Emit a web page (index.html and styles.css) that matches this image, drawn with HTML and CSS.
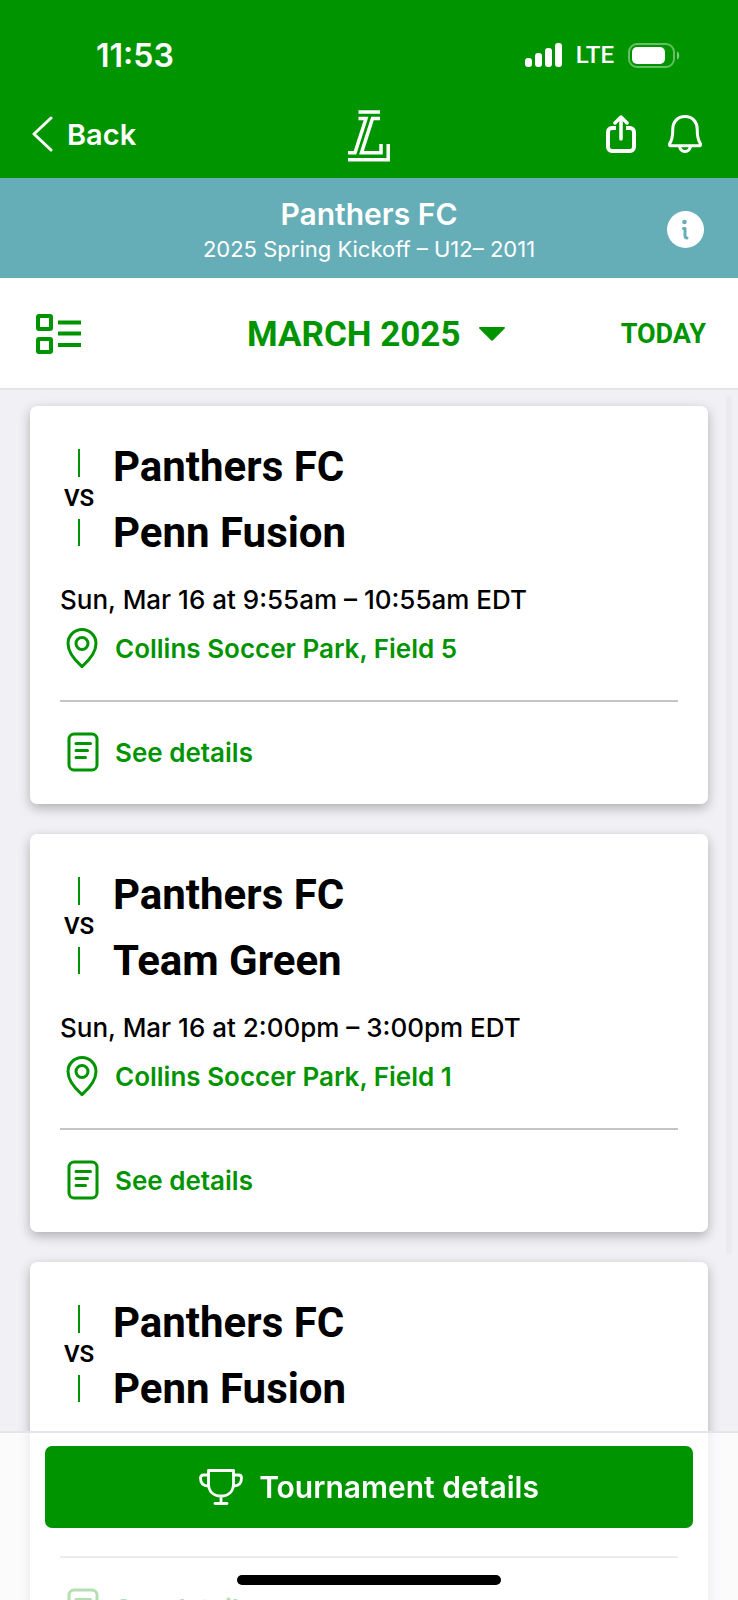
FILE: index.html
```html
<!DOCTYPE html>
<html lang="en">

<head>
    <meta charset="UTF-8">
    <meta name="viewport" content="width=device-width, initial-scale=1.0">
    <title>Panthers FC</title>
    <link rel="stylesheet" href="styles.css">
</head>

<body>
    <!-- shared card icons -->
    <svg class="sprite" aria-hidden="true">
        <symbol id="icon-pin" viewBox="0 0 44 44">
            <path d="M22 40.5C18 37 8 28.500 8 17.500a14 14 0 0 1 28 0C36 28.500 26 37 22 40.500Z" />
            <circle cx="22" cy="17.500" r="6" />
        </symbol>
        <symbol id="icon-details" viewBox="0 0 44 44">
            <rect x="9" y="4" width="28" height="36" rx="5" />
            <path d="M16 13.500h14.500M16 20.500h11.500M16 27.500h9.500" />
        </symbol>
    </svg>

    <header class="header">
        <div class="status-bar">
            <span class="time">11:53</span>
            <div class="status-icons">
                <svg width="37" height="24" viewBox="0 0 37 24" fill="#fff" aria-hidden="true">
                    <rect x="0" y="15" width="7" height="9" rx="3" />
                    <rect x="10" y="10" width="7" height="14" rx="3" />
                    <rect x="20" y="5" width="7" height="19" rx="3" />
                    <rect x="30" y="0" width="7" height="24" rx="3" />
                </svg>
                <span class="network">LTE</span>
                <svg width="52" height="25" viewBox="0 0 52 25" aria-hidden="true">
                    <rect x="1" y="1" width="45" height="23" rx="8" fill="none" stroke="#fff" stroke-opacity=".4" stroke-width="2" />
                    <rect x="4" y="4" width="33" height="17" rx="5" fill="#fff" />
                    <path d="M49 8.500c3 1 3 7 0 8Z" fill="#fff" fill-opacity=".5" />
                </svg>
            </div>
        </div>

        <nav class="nav">
            <a class="back" href="#">
                <svg width="21" height="36" viewBox="0 0 21 36" aria-hidden="true">
                    <path d="M19 2 2 18l17 16" fill="none" stroke="#fff" stroke-width="3" stroke-linecap="round" stroke-linejoin="round" />
                </svg>
                Back
            </a>
            <svg class="logo" width="42" height="52" viewBox="0 0 42 52" role="img" aria-label="Home">
                <path d="M10.500 2H32M10.500 8.500H18L7 42.800H0M32 8.500h-7.500L13.500 42.800H33V34M0 49.700h40.200V34" fill="none" stroke="#fff" stroke-width="3.500" />
            </svg>
            <div class="nav-actions">
                <button class="icon-button" aria-label="Share">
                    <svg width="30" height="38" viewBox="0 0 30 38" fill="none" stroke="#fff" stroke-width="4" aria-hidden="true">
                        <path d="M10 13H6a4 4 0 0 0-4 4v15a4 4 0 0 0 4 4h18a4 4 0 0 0 4-4V17a4 4 0 0 0-4-4h-4" />
                        <path d="M15 24V3M9 8l6-6 6 6" stroke-width="3.500" stroke-linecap="round" stroke-linejoin="round" />
                    </svg>
                </button>
                <button class="icon-button" aria-label="Notifications">
                    <svg width="34" height="38" viewBox="0 0 34 38" fill="none" stroke="#fff" stroke-width="3" stroke-linejoin="round" aria-hidden="true">
                        <path d="M17 1.500C9.500 1.500 4.800 7 4.800 14c0 7-.8 11.500-3.100 14.500-.6 1.500 0 2.300 1 2.300h28.600c1 0 1.600-.8 1-2.300C30 25.500 29.200 21 29.200 14 29.200 7 24.500 1.500 17 1.500Z" />
                        <path d="M11.500 31c.5 3.500 2.500 5.500 5.500 5.500s5-2 5.500-5.500" />
                    </svg>
                </button>
            </div>
        </nav>
    </header>

    <section class="team-bar">
        <div class="team-text">
            <h1>Panthers FC</h1>
            <p>2025 Spring Kickoff – U12– 2011</p>
        </div>
        <button class="icon-button" aria-label="Team info">
            <svg width="37" height="37" viewBox="0 0 37 37" aria-hidden="true">
                <circle cx="18.500" cy="18.500" r="18.500" fill="#fff" />
                <circle cx="17.500" cy="11" r="2.300" fill="#65aeb8" />
                <path d="M16.500 17.500h1.500v7c0 1.800 1 2.500 2 2.500" fill="none" stroke="#65aeb8" stroke-width="3" stroke-linejoin="round" stroke-linecap="round" />
            </svg>
        </button>
    </section>

    <section class="toolbar">
        <button class="icon-button list-button" aria-label="List view">
            <svg width="46" height="40" viewBox="0 0 46 40" fill="none" stroke="#009400" stroke-width="4" aria-hidden="true">
                <rect x="2" y="2" width="13" height="13" rx="1" />
                <rect x="2" y="25" width="13" height="13" rx="1" />
                <path d="M22 8.500h23M22 19.500h23M22 31h23" />
            </svg>
        </button>
        <div class="month-picker">
            <select class="month" aria-label="Month">
                <option>MARCH 2025</option>
                <option>APRIL 2025</option>
            </select>
            <svg width="26" height="14" viewBox="0 0 26 14" aria-hidden="true">
                <path d="M1 0h24c1 0 1.300.8.700 1.500L14 13.200a1.500 1.500 0 0 1-2 0L.3 1.500C-.3.800 0 0 1 0Z" fill="#009400" />
            </svg>
        </div>
        <button class="today">TODAY</button>
    </section>

    <main class="schedule">
        <article class="card">
            <div class="matchup">
                <div class="versus"><span>VS</span></div>
                <div class="teams">
                    <h2>Panthers FC</h2>
                    <h2>Penn Fusion</h2>
                </div>
            </div>
            <p class="date">Sun, Mar 16 at 9:55am – 10:55am EDT</p>
            <a class="card-link" href="#">
                <svg class="card-icon"><use href="#icon-pin" /></svg>
                Collins Soccer Park, Field 5
            </a>
            <a class="card-link details" href="#">
                <svg class="card-icon"><use href="#icon-details" /></svg>
                See details
            </a>
        </article>

        <article class="card">
            <div class="matchup">
                <div class="versus"><span>VS</span></div>
                <div class="teams">
                    <h2>Panthers FC</h2>
                    <h2>Team Green</h2>
                </div>
            </div>
            <p class="date">Sun, Mar 16 at 2:00pm – 3:00pm EDT</p>
            <a class="card-link" href="#">
                <svg class="card-icon"><use href="#icon-pin" /></svg>
                Collins Soccer Park, Field 1
            </a>
            <a class="card-link details" href="#">
                <svg class="card-icon"><use href="#icon-details" /></svg>
                See details
            </a>
        </article>

        <article class="card">
            <div class="matchup">
                <div class="versus"><span>VS</span></div>
                <div class="teams">
                    <h2>Panthers FC</h2>
                    <h2>Penn Fusion</h2>
                </div>
            </div>
            <p class="date">&nbsp;</p>
            <a class="card-link" href="#" aria-label="Location">
                <svg class="card-icon"><use href="#icon-pin" /></svg>
            </a>
            <a class="card-link details" href="#">
                <svg class="card-icon"><use href="#icon-details" /></svg>
                See details
            </a>
        </article>

        <div class="scroll-thumb"></div>
    </main>

    <footer class="footer">
        <button class="tournament">
            <svg width="44" height="36" viewBox="0 0 44 36" fill="none" stroke="#fff" stroke-width="2.800" stroke-linecap="round" stroke-linejoin="round" aria-hidden="true">
                <path d="M9.500 1.500h25v13c0 8-5 12.500-12.500 12.500S9.500 22.500 9.500 14.500ZM22 27v7M16 34.500h12" />
                <path d="M9.500 6H4.500C2.500 6 1.500 7 1.500 9c0 5 2.500 8 8 8M34.500 6h5c2 0 3 1 3 3 0 5-2.500 8-8 8" />
            </svg>
            Tournament details
        </button>
        <div class="home-indicator"></div>
    </footer>
</body>

</html>
```
FILE: styles.css
```css
* {
    margin: 0;
    padding: 0;
    box-sizing: border-box;
}

body {
    display: flex;
    flex-direction: column;
    height: 100vh;
    overflow: hidden;
    background-color: #f1f0f5;
    color: #000;
    font-family: Inter, "Liberation Sans", sans-serif;
}

a {
    text-decoration: none;
}

button,
select {
    border: none;
    background: none;
    font-family: inherit;
    cursor: pointer;
}

svg {
    display: block;
    flex-shrink: 0;
}

.sprite {
    position: absolute;
    width: 0;
    height: 0;
}

/* Green header */
.header {
    background-color: #009400;
    color: #fff;
}

.status-bar {
    display: flex;
    align-items: center;
    justify-content: space-between;
    height: 90px;
    padding: 20px 58px 0 96px;
}

.time {
    font-size: 32px;
    font-weight: 600;
}

.status-icons {
    display: flex;
    align-items: center;
    gap: 14px;
}

.network {
    font-family: Roboto, sans-serif;
    font-size: 24px;
    font-weight: 500;
}

.nav {
    display: grid;
    grid-template-columns: 1fr auto 1fr;
    align-items: center;
    height: 88px;
    padding: 0 36px 0 32px;
}

.back {
    display: flex;
    align-items: center;
    gap: 14px;
    color: #fff;
    font-size: 29px;
    font-weight: 600;
}

.logo {
    margin: 4px 0 0 4px;
}

.nav-actions {
    display: flex;
    align-items: center;
    justify-content: flex-end;
    gap: 32px;
}

/* Team name strip */
.team-bar {
    display: grid;
    grid-template-columns: 1fr auto 1fr;
    align-items: center;
    padding: 16px 34px 14px;
    background-color: #65aeb8;
    color: #fff;
}

.team-text {
    grid-column: 2;
    text-align: center;
}

.team-text h1 {
    font-size: 30px;
    font-weight: 600;
    line-height: 40px;
}

.team-text p {
    font-size: 22px;
    line-height: 30px;
}

.team-bar .icon-button {
    justify-self: end;
}

/* Month toolbar */
.toolbar {
    display: grid;
    grid-template-columns: 1fr auto 1fr;
    align-items: center;
    height: 112px;
    padding: 2px 32px 0 36px;
    border-bottom: 2px solid #e5e4ea;
    background-color: #fff;
}

.month-picker {
    display: flex;
    align-items: center;
    gap: 18px;
    margin-left: 10px;
}

.month {
    appearance: none;
    color: #009400;
    font-family: Roboto, sans-serif;
    font-size: 35px;
    font-weight: 700;
}

.today {
    justify-self: end;
    color: #009400;
    font-family: Roboto, sans-serif;
    font-size: 27px;
    font-weight: 700;
}

/* Game cards */
.schedule {
    position: relative;
    flex: 1;
    display: flex;
    flex-direction: column;
    gap: 30px;
    min-height: 0;
    padding: 16px 30px;
    overflow: hidden;
}

.card {
    flex-shrink: 0;
    padding: 28px 30px 0;
    border-radius: 7px;
    background-color: #fff;
    box-shadow: 0 4px 12px rgba(0, 0, 0, 0.28);
}

.matchup {
    display: flex;
    gap: 15px;
}

.versus {
    display: flex;
    flex-direction: column;
    align-items: center;
    gap: 8px;
    width: 38px;
    padding: 15px 0 20px;
    font-family: Roboto, sans-serif;
    font-size: 24px;
    font-weight: 600;
    line-height: 26px;
}

.versus::before,
.versus::after {
    content: "";
    flex: 1;
    width: 2px;
    background-color: #009400;
}

.teams h2 {
    font-family: Roboto, sans-serif;
    font-size: 42px;
    font-weight: 700;
    line-height: 66px;
}

.date {
    margin-top: 10px;
    font-size: 26px;
    font-weight: 500;
    line-height: 48px;
}

.card-link {
    display: flex;
    align-items: center;
    gap: 11px;
    min-height: 48px;
    color: #009400;
    font-size: 26px;
    font-weight: 600;
}

.card-icon {
    width: 44px;
    height: 44px;
    fill: none;
    stroke: #009400;
    stroke-width: 3px;
    stroke-linecap: round;
    stroke-linejoin: round;
}

.details {
    height: 104px;
    margin-top: 28px;
    padding-bottom: 2px;
    border-top: 2px solid #c4c4c4;
}

.scroll-thumb {
    position: absolute;
    top: 6px;
    right: 6px;
    width: 6px;
    height: 858px;
    border-radius: 3px;
    background-color: #ebebef;
}

/* Footer laid over the list */
.footer {
    position: fixed;
    right: 0;
    bottom: 0;
    left: 0;
    display: flex;
    flex-direction: column;
    align-items: center;
    gap: 47px;
    padding: 13px 45px 15px;
    border-top: 2px solid #e5e4ea;
    background-color: rgba(255, 255, 255, 0.7);
}

.tournament {
    display: flex;
    align-items: center;
    justify-content: center;
    gap: 16px;
    width: 100%;
    height: 82px;
    border-radius: 7px;
    background-color: #009400;
    color: #fff;
    font-size: 30px;
    font-weight: 600;
}

.home-indicator {
    width: 264px;
    height: 10px;
    border-radius: 5px;
    background-color: #000;
}
```
